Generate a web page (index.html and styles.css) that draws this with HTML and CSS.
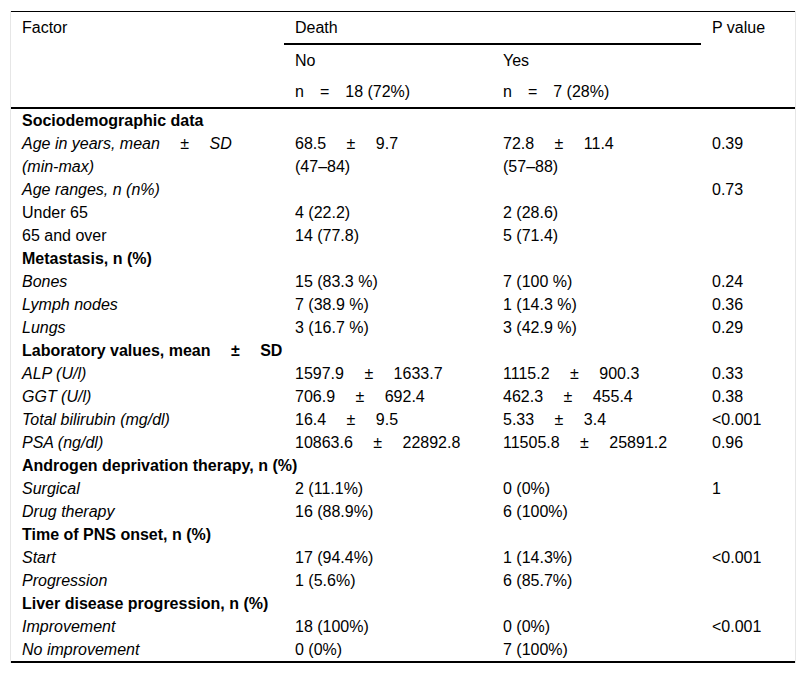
FILE: index.html
```html
<!DOCTYPE html>
<html lang="en">
<head>
<meta charset="utf-8">
<title>Table</title>
<link rel="stylesheet" href="styles.css">
</head>
<body>
<div class="wrap">
<table class="data">
<colgroup>
<col class="c-factor"><col class="c-no"><col class="c-yes"><col class="c-p">
</colgroup>
<thead>
<tr>
<th rowspan="3" class="last">Factor</th>
<th colspan="2" class="span">Death</th>
<th rowspan="3" class="last">P value</th>
</tr>
<tr>
<th>No</th>
<th>Yes</th>
</tr>
<tr>
<th class="last">n&emsp;=&emsp;18 (72%)</th>
<th class="last">n&emsp;=&emsp;7 (28%)</th>
</tr>
</thead>
<tbody>
<tr><td class="sec">Sociodemographic data</td><td></td><td></td><td></td></tr>
<tr><td class="it">Age in years, mean &emsp;±&emsp; SD<br>(min-max)</td><td>68.5 &emsp;±&emsp; 9.7<br>(47–84)</td><td>72.8 &emsp;±&emsp; 11.4<br>(57–88)</td><td>0.39</td></tr>
<tr><td class="it">Age ranges, n (n%)</td><td></td><td></td><td>0.73</td></tr>
<tr><td>Under 65</td><td>4 (22.2)</td><td>2 (28.6)</td><td></td></tr>
<tr><td>65 and over</td><td>14 (77.8)</td><td>5 (71.4)</td><td></td></tr>
<tr><td class="sec">Metastasis, n (%)</td><td></td><td></td><td></td></tr>
<tr><td class="it">Bones</td><td>15 (83.3 %)</td><td>7 (100 %)</td><td>0.24</td></tr>
<tr><td class="it">Lymph nodes</td><td>7 (38.9 %)</td><td>1 (14.3 %)</td><td>0.36</td></tr>
<tr><td class="it">Lungs</td><td>3 (16.7 %)</td><td>3 (42.9 %)</td><td>0.29</td></tr>
<tr><td class="sec">Laboratory values, mean &emsp;±&emsp; SD</td><td></td><td></td><td></td></tr>
<tr><td class="it">ALP (U/l)</td><td>1597.9 &emsp;±&emsp; 1633.7</td><td>1115.2 &emsp;±&emsp; 900.3</td><td>0.33</td></tr>
<tr><td class="it">GGT (U/l)</td><td>706.9 &emsp;±&emsp; 692.4</td><td>462.3 &emsp;±&emsp; 455.4</td><td>0.38</td></tr>
<tr><td class="it">Total bilirubin (mg/dl)</td><td>16.4 &emsp;±&emsp; 9.5</td><td>5.33 &emsp;±&emsp; 3.4</td><td>&lt;0.001</td></tr>
<tr><td class="it">PSA (ng/dl)</td><td>10863.6 &emsp;±&emsp; 22892.8</td><td>11505.8 &emsp;±&emsp; 25891.2</td><td>0.96</td></tr>
<tr><td class="sec">Androgen deprivation therapy, n (%)</td><td></td><td></td><td></td></tr>
<tr><td class="it">Surgical</td><td>2 (11.1%)</td><td>0 (0%)</td><td>1</td></tr>
<tr><td class="it">Drug therapy</td><td>16 (88.9%)</td><td>6 (100%)</td><td></td></tr>
<tr><td class="sec">Time of PNS onset, n (%)</td><td></td><td></td><td></td></tr>
<tr><td class="it">Start</td><td>17 (94.4%)</td><td>1 (14.3%)</td><td>&lt;0.001</td></tr>
<tr><td class="it">Progression</td><td>1 (5.6%)</td><td>6 (85.7%)</td><td></td></tr>
<tr><td class="sec">Liver disease progression, n (%)</td><td></td><td></td><td></td></tr>
<tr><td class="it">Improvement</td><td>18 (100%)</td><td>0 (0%)</td><td>&lt;0.001</td></tr>
<tr class="end"><td class="it">No improvement</td><td>0 (0%)</td><td>7 (100%)</td><td></td></tr>
</tbody>
</table>
</div>
</body>
</html>
```
FILE: styles.css
```css
html, body {
  margin: 0;
  padding: 0;
  background: #fff;
}

body {
  font-family: "Liberation Sans", Arial, sans-serif;
  font-size: 16px;
  color: #000;
}

.wrap {
  margin: 11px 10px 0 10px;
  border-left: 1px solid #e6e6e6;
  border-right: 1px solid #e6e6e6;
}

.data {
  width: 100%;
  table-layout: fixed;
  border-collapse: separate;
  border-spacing: 0;
  border-top: 1px solid #000;
}

.c-factor { width: 273px; }
.c-no { width: 208px; }
.c-yes { width: 209px; }
.c-p { width: 94px; }

.data th {
  font-weight: normal;
  text-align: left;
  vertical-align: top;
  line-height: 23px;
  padding: 4px 11px;
}

.data th.span {
  border-bottom: 2px solid #000;
}

.data th.last {
  border-bottom: 2px solid #000;
}

.data td {
  text-align: left;
  vertical-align: top;
  line-height: 23px;
  padding: 0 11px;
  white-space: nowrap;
}

.data td.it {
  font-style: italic;
}

.data td.sec {
  font-weight: bold;
}

.data tr.end td {
  border-bottom: 2px solid #000;
}
```
